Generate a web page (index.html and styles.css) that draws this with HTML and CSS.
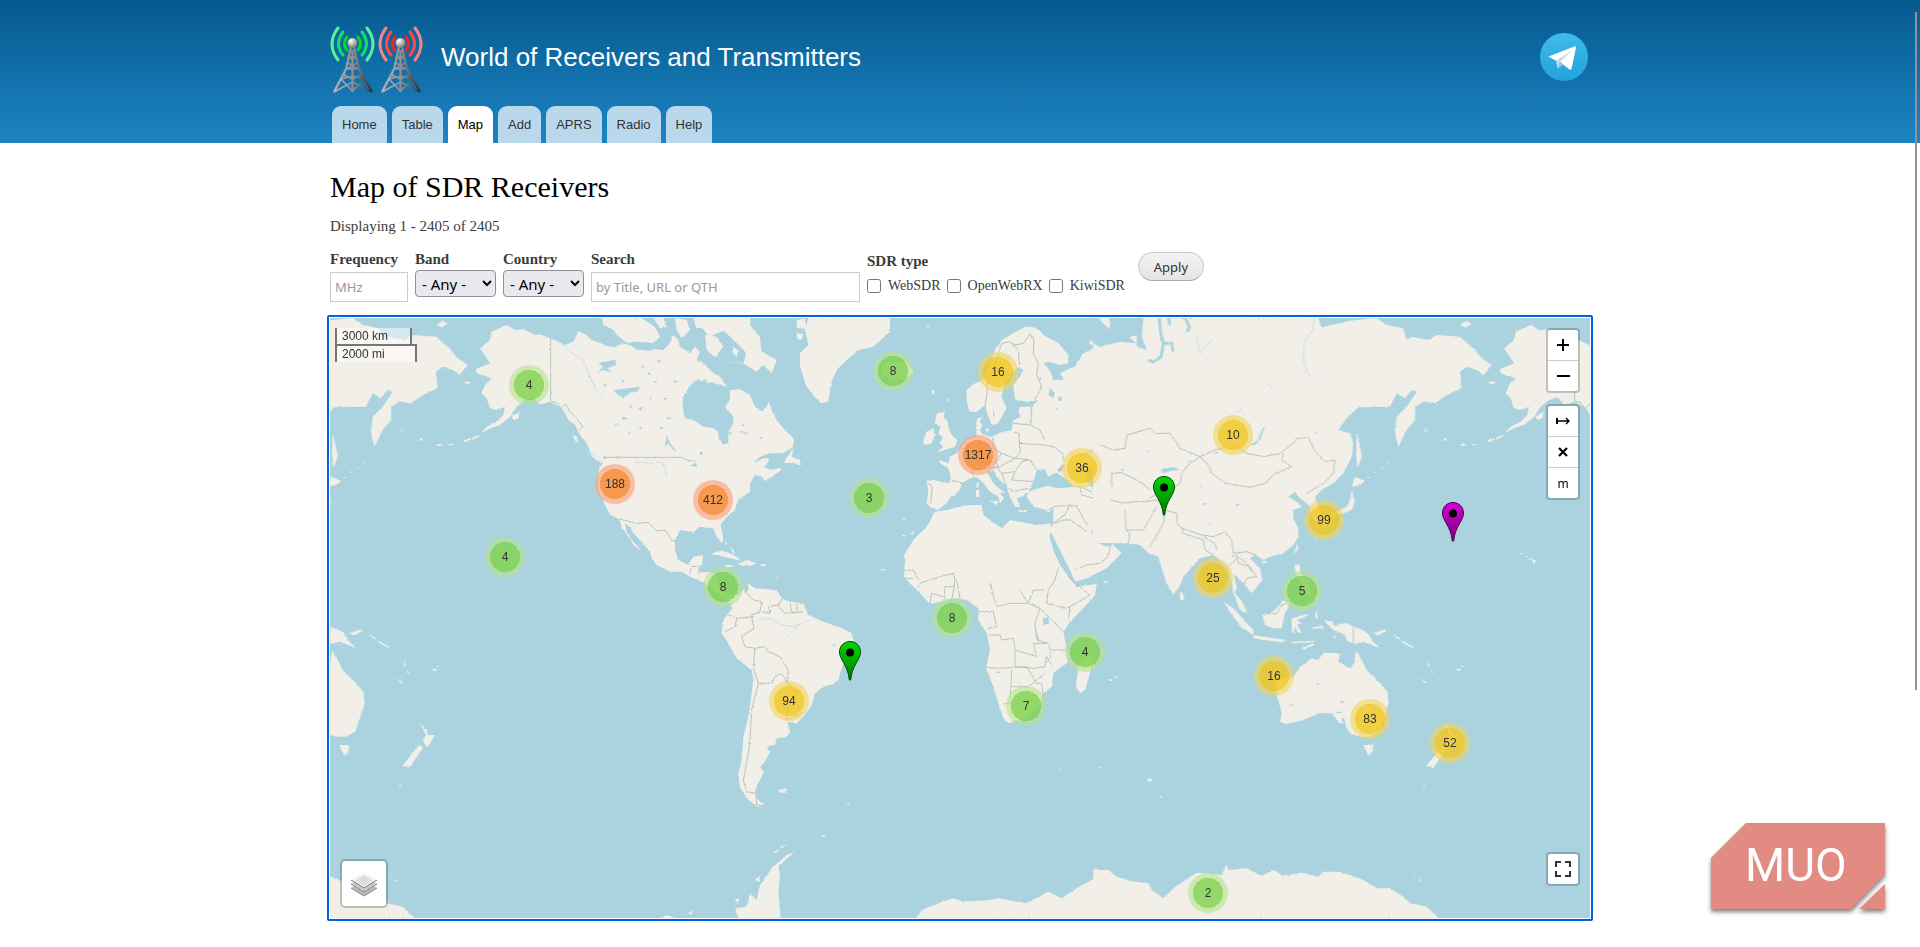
FILE: index.html
```html
<!DOCTYPE html>
<html lang="en">
<head>
<meta charset="utf-8">
<title>Map of SDR Receivers</title>
<link rel="stylesheet" href="styles.css">
</head>
<body>
<header class="header">
  <div class="wrap">
    <div class="branding">
      <a class="logo" href="#" aria-label="Home">
        <svg width="94" height="68" viewBox="0 0 94 68" fill="none">
          <defs>
            <radialGradient id="ball" cx=".35" cy=".3" r=".8"><stop offset="0" stop-color="#fff"/><stop offset="1" stop-color="#666"/></radialGradient>
            <linearGradient id="steel" gradientUnits="userSpaceOnUse" x1="4" x2="42"><stop offset="0" stop-color="#b4b8bc"/><stop offset=".55" stop-color="#8a8a8e"/><stop offset="1" stop-color="#2e2e34"/></linearGradient>
            <g id="mast" stroke="url(#steel)">
              <path d="M21 21 16 43 4 66M24 21l5 22 13 23M22.500 24v42" stroke-width="2.200"/>
              <path d="M19.500 30l6 3M25.500 30l-6 3M18 37l10 6M27 37l-10 6M16 43h13M16 43l-2 6 8.500 4 8.500-4-2-6M11 53l11.500 12L35 53M11 53l11.500-3L35 53M4 66l18.500-10L42 66" stroke-width="1.600"/>
              <circle cx="22.500" cy="17" r="5" fill="url(#ball)" stroke="none"/>
            </g>
          </defs>
          <use href="#mast"/><use href="#mast" x="48"/>
          <g stroke-width="3" stroke-linecap="round">
            <g stroke="#00dc20"><path d="M17 11q-5 7 0 13M28 11q5 7 0 13"/></g>
            <g stroke="#10e068"><path d="M13 6q-9 12 0 23M32 6q9 12 0 23"/></g>
            <g stroke="#58f09c"><path d="M8 2q-12 16 0 32M37 2q12 16 0 32"/></g>
            <g stroke="#ff2020"><path d="M65 11q-5 7 0 13M76 11q5 7 0 13"/></g>
            <g stroke="#ff4848"><path d="M61 6q-9 12 0 23M80 6q9 12 0 23"/></g>
            <g stroke="#ff8080"><path d="M56 2q-12 16 0 32M85 2q12 16 0 32"/></g>
          </g>
        </svg>
      </a>
      <a class="site-name" href="#">World of Receivers and Transmitters</a>
      <a class="telegram" href="#" aria-label="Telegram">
        <svg width="48" height="48" viewBox="0 0 48 48">
          <defs><linearGradient id="tg" x2="0" y2="1"><stop offset="0" stop-color="#40bae8"/><stop offset="1" stop-color="#22a3dc"/></linearGradient></defs>
          <circle cx="24" cy="24" r="24" fill="url(#tg)"/>
          <path d="M8.500 23.500 35 13.200q1.300-.3 1 1.300L31.500 36q-.7 1.300-2 .4L20 29l-3.500-1z" fill="#fff"/>
          <path d="M16 27.500 32 17.500 20 29l-1.700 6.500q-.8 0-1-1z" fill="#c8daea"/>
          <path d="M20 29l3 2.200-4.700 4.300z" fill="#a0c4dc"/>
        </svg>
      </a>
    </div>
    <nav class="tabs">
      <a href="#">Home</a><a href="#">Table</a><a href="#" class="active">Map</a><a href="#">Add</a><a href="#">APRS</a><a href="#">Radio</a><a href="#">Help</a>
    </nav>
  </div>
</header>
<main class="wrap">
  <h1>Map of SDR Receivers</h1>
  <p class="count">Displaying 1 - 2405 of 2405</p>
  <form class="filters">
    <div class="field freq"><label for="freq">Frequency</label><input id="freq" type="text" placeholder="MHz"></div>
    <div class="field"><label for="band">Band</label><select id="band"><option>- Any -</option></select></div>
    <div class="field"><label for="country">Country</label><select id="country"><option>- Any -</option></select></div>
    <div class="field search"><label for="q">Search</label><input id="q" type="text" placeholder="by Title, URL or QTH"></div>
    <fieldset class="types"><legend>SDR type</legend>
      <div class="checks">
        <input type="checkbox" id="t1"><label for="t1">WebSDR</label>
        <input type="checkbox" id="t2"><label for="t2">OpenWebRX</label>
        <input type="checkbox" id="t3"><label for="t3">KiwiSDR</label>
      </div>
    </fieldset>
    <button class="apply" type="button">Apply</button>
  </form>
  <div class="frame">
  <section class="map" aria-label="Map">
    <div class="pane">
      <svg class="world" width="1260" height="600" viewBox="-1110 24 3780 1800">
        <defs>
          <filter id="coast" filterUnits="userSpaceOnUse" x="-1200" y="-30" width="3960" height="1920">
            <feTurbulence type="fractalNoise" baseFrequency=".14" numOctaves="2" seed="4"/>
            <feDisplacementMap in="SourceGraphic" scale="7" xChannelSelector="R" yChannelSelector="G"/>
          </filter>
          <linearGradient id="gpin" x2="0" y2="1"><stop offset="0" stop-color="#00d800"/><stop offset="1" stop-color="#007800"/></linearGradient>
          <linearGradient id="ppin" x2="0" y2="1"><stop offset="0" stop-color="#d800d8"/><stop offset="1" stop-color="#780078"/></linearGradient>
          <g id="globe">
            <!-- North America, west -->
            <g transform="translate(-1140 0)">
              <path class="land" d="M560 45L585 60 610 58 640 72 665 75 690 85 715 95 735 105 760 95 775 65 800 75 815 90 840 98 860 108 885 112 905 100 930 105 950 118 985 122 1010 118 1030 120 1050 100 1060 75 1075 90 1080 110 1110 130 1125 110 1140 125 1130 150 1150 165 1150 185 1145 205 1120 215 1105 235 1090 260 1087 290 1095 325 1120 330 1150 350 1180 355 1195 365 1195 385 1210 405 1225 400 1290 440V545L1255 570 1243 600 1215 625 1202 645 1210 690 1205 700 1190 680 1180 655 1140 650 1120 665 1080 660 1065 690 1065 720 1075 750 1105 765 1120 740 1150 735 1145 765 1135 785 1165 788 1185 800 1190 845 1215 860 1240 862 1270 850 1290 840V880H1230L1215 865 1185 845 1150 815 1110 800 1085 785 1050 785 1010 765 995 745 990 725 960 690 940 670 930 650 915 640 920 665 935 690 950 705 960 720 940 705 925 680 905 650 898 628 870 615 855 585 835 540 832 510 838 470 850 460 835 445 810 425 800 400 780 375 765 345 745 330 730 300 710 285 690 275 660 283 640 262 615 270 590 290 570 320 540 345 510 355 480 370 500 350 530 335 550 315 555 290 530 300 510 295 500 265 485 250 495 225 515 205 470 190 468 178 510 160 480 115 510 90 515 65Z"/>
              <path class="land" d="M845 24H965L1005 50 1020 80 1000 100 960 95 920 98 890 75 880 60 850 45ZM1000 24H1030L1040 50 1022 56ZM1065 24 1100 30 1110 60 1085 85 1070 60ZM1120 24H1290V80L1250 95 1220 60 1190 70 1150 50 1130 55ZM1155 75 1190 80 1210 110 1185 140 1160 120ZM1240 110 1255 120 1250 140 1238 130ZM1160 180 1200 200 1220 230 1180 215 1160 220ZM350 45 370 34 382 42 365 52ZM575 318 600 305 595 325 580 330ZM432 215 452 215 445 222ZM760 375 770 380 775 400 762 388ZM800 425 830 440 850 458 832 452ZM350 402h14v5h-14ZM385 402h14v4h-14ZM430 392l20-8 2 5-18 8ZM455 385l20-10 3 4-20 10ZM300 385h7v7h-7ZM240 355l10 8-6 2ZM1174 730 1205 722 1240 735 1262 750 1230 745 1205 738ZM1255 765 1290 750V768ZM1215 765h22v6h-20Z"/>
              <path class="water" d="M835 158 885 150 888 165 860 175 880 190 850 180 830 190 850 170ZM880 240 925 235 960 230 950 245 930 248 910 265 895 255ZM1040 375 1050 400 1070 425 1060 420 1045 400 1035 410ZM1112 468 1140 450 1180 465 1190 480 1160 475 1130 470ZM1150 530 1150 490 1165 485 1180 500 1165 510 1162 530ZM1185 520 1182 490 1200 485 1212 495 1200 505 1195 520ZM905 320l20 5-15 5ZM955 295l15-5-8 12ZM880 340l25 8-20-2ZM1030 265l15-2-10 8ZM1040 320l14 5-10 5ZM965 165l12 3-9 7ZM1060 210l14 4-10 5ZM955 350l14 2-9 5ZM1140 425h8v9h-8ZM1015 350l18 4-10 4ZM985 185l10 10-12-2ZM805 195l10 6-12-1ZM905 210l12 4-10 5ZM930 285l9 5-11 3ZM1000 215l12-4-4 9ZM1010 150l14 3-9 6ZM850 225l10-3-4 8ZM925 365l10 4-9 3ZM990 260l7 6-9 3Z"/>
              <path class="border" d="M692 85V273L710 278 722 295 738 283 750 305 770 325 788 350 780 362M850 442H1087L1100 450 1120 453 1150 455 1175 475 1192 490 1195 520 1215 525 1245 510 1260 492 1290 490M900 628 950 640 985 637 1010 663 1035 660 1055 690 1066 695M1110 790 1115 770 1140 768 1135 790 1165 790 1150 810"/>
              <path class="river" d="M720 95 750 125 790 150 805 190 825 235 850 260M945 455 1000 460M1010 455 1035 465 1040 500M1230 160 1255 155 1280 165"/>
            </g>
            <!-- North America, east; Greenland; Atlantic islands -->
            <path class="land" d="M-10 440 30 425 62 405 85 400 85 365 100 340 100 320 75 290 90 270 90 240 120 238 150 255 165 290 185 305 200 290 207 275 215 300 230 330 250 355 280 385 280 410 250 430 210 430 180 440 160 460 190 445 208 445 200 465 190 470 215 480 235 475 245 480 215 500 195 512 185 500 165 495 155 510 145 530 125 545 110 570 105 600 75 625 62 645 60 600-10 600ZM325 24H570V65L520 110 475 120 440 150 410 180 395 215 385 275 365 280 345 262 320 230 300 170 300 130 325 105 315 60ZM0 24H130L180 80 185 125 230 150 215 190 190 165 170 185 130 160 140 130 110 100 70 60 30 80 0 50ZM290 30l25-4 5 30-30-2ZM290 68l20 5-5 18-14-5ZM0 150 40 190 55 225 20 210 0 215ZM45 90 65 100 50 140 30 130ZM280 415 275 440 300 450 302 468 280 458 250 460 262 440ZM210 480l30-6-12 10ZM545 165 570 155 620 155 640 185 620 205 580 212 550 195Z"/>
            <path class="water" d="M80 370l18-6-8 10ZM125 340l10 5-8 5ZM120 362l12 3-9 4ZM135 365l8 7-10 1ZM180 380l10 4-8 4Z"/>
            <path class="land" d="M35 735 65 722 90 730 120 750 100 748 70 735ZM115 762 140 750 170 760 150 768ZM75 765h22v5h-20ZM182 763h14v5h-14ZM75 690l8 12-5 3ZM90 705l15 25-4 2ZM230 790l4 20-4-5ZM605 672l12 4-8 4ZM628 674l10-8 2 5ZM540 778l15 0 0 4-14-2ZM695 240h7v12h-5ZM742 275l5-12 2 8ZM608 627h8v4h-8ZM680 48h10v4h-10ZM635 665l10 0-5 6Z"/>
            <!-- Europe and western Asia -->
            <path class="land" d="M1310 76 1290 80 1270 110 1245 105 1220 115 1190 110 1150 130 1125 170 1100 180 1080 190 1090 210 1060 210 1050 180 1030 160 1045 155 1080 165 1105 160 1105 135 1075 100 1030 75 1020 62 1000 50 975 50 940 70 905 90 885 120 870 160 850 210 820 222 800 240 800 270 808 305 830 305 855 285 865 320 875 345 895 340 905 320 920 295 905 260 910 230 935 190 955 170 970 180 960 200 940 225 945 270 985 275 1015 270 995 290 960 290 955 305 960 322 940 330 935 360 900 368 875 380 850 375 840 362 848 345 838 335 850 322 832 325 828 345 830 380 800 390 780 415 770 430 750 440 745 460 718 450 720 460 745 475 752 500 748 520 700 510 680 512 685 540 680 580 690 590 710 600 735 585 755 560 780 540 785 520 810 505 830 500 850 520 870 545 895 560 900 580 912 565 900 550 915 550 880 520 870 500 860 485 880 480 890 500 920 530 930 560 945 590 960 590 950 565 970 558 985 540 980 560 1000 590 1040 600 1060 590 1060 640 1050 660 1060 680 1090 740 1110 780 1125 815 1160 805 1220 775 1265 730 1240 705 1220 710 1195 700 1170 660 1190 670 1220 690 1310 700Z"/>
            <path class="land" d="M710 310 735 305 730 325 742 330 745 350 755 375 772 390 765 410 740 418 712 428 730 410 718 400 728 385 715 370 722 350 705 340ZM680 365 700 355 705 375 695 400 672 405 670 390ZM828 540h10v20h-10ZM830 518l7 0-2 16-6-3ZM870 572l25 2-5 12ZM955 600h28v5h-28ZM1035 602l20-4-8 8ZM755 555l14-5-4 8ZM858 355l8 0-2 10-8-3ZM1195 24H1225L1245 60 1225 55 1205 35ZM1168 92l12 0-2 12-10-2Z"/>
            <path class="water" d="M1000 515 1010 480 1035 478 1045 500 1060 492 1070 488 1110 515 1120 530 1080 535 1040 528 1000 540 985 545ZM1070 480 1090 462 1095 470 1080 488ZM1160 480 1205 470 1208 490 1185 515 1215 545 1215 585 1185 580 1180 540 1160 510ZM1050 235l15 15-5 15-15-10ZM1075 260h10v12h-10ZM880 300l5 15-6 2ZM1032 925h15v20h-18ZM1065 290l8 4-4 6ZM1020 200l5 8-8 2ZM1240 490h20v6h-16Z"/>
            <path class="border" d="M895 130 905 100 930 95 945 105 970 100 990 72 1002 90 1000 130 1015 160 1010 195 1025 230 1005 268M930 95 955 120 958 165M895 130 880 180 862 205 860 260 855 290M995 290 992 345 1020 360 1033 390M940 340 990 345M940 365 957 370 960 430 945 445M957 400 1033 405 1060 410 1088 430 1090 450M878 380 880 415 905 430 945 445 990 450 1010 480M800 400 805 440 830 455 870 460 890 455 905 430M752 510 790 520M685 520 697 530 692 580M820 500 815 480 860 475 900 470 945 445M890 470 905 490 945 485 965 455 985 450M945 485 935 510 1000 515M905 490 920 530 940 545 985 535M890 455 895 480M1115 530 1140 530 1145 555 1180 565M1060 590 1110 585 1130 590 1165 650M1060 640 1090 630 1112 630 1160 665M1110 585 1095 615 1065 635M1140 530 1175 545M1125 780 1160 765 1200 760 1225 740 1230 710M1215 575 1250 570 1290 610M1160 430 1200 405 1240 420 1280 405 1290 375M1290 530 1235 530 1235 490 1260 488M745 605 740 625 685 660 680 695M680 680 790 755 793 785 765 795 745 795 720 820M652 700 690 690 M612 738 635 735 652 695M703 705 710 790H650L620 785M827 585 830 610 840 650 840 700 857 720 793 755M857 720 885 730 958 750 968 748 970 640M970 730H1070M958 750 945 820 950 840 1000 870 1035 840M885 730 888 780 875 810 885 850 890 870 950 840M780 860 790 810 870 812 880 830 850 870 835 900 860 905 870 890"/>
            <!-- Africa and South America -->
            <g transform="translate(0 690)">
              <path class="land" d="M705-85 740-90 800-105 845-105 850-75 870-60 905-35 930-60 960-55 1010-45 1040-48 1050-50 1056-30 1048-15 1060 30 1080 75 1105 110 1130 140 1190 132 1185 165 1150 205 1110 245 1090 275 1100 330 1105 365 1060 400 1055 440 1030 460 1020 490 985 530 925 550 910 535 895 490 880 440 858 385 870 330 860 280 835 240 835 205 800 180 770 175 690 192 650 150 612 110 615 60 612 45 640 0 680-40ZM1165 335 1180 355 1170 400 1155 450 1140 460 1128 440 1135 380 1150 360ZM1228 418h5v5h-5ZM1246 410h5v4h-5ZM1210 124h12v4h-12Z"/>
              <path class="water" d="M1028 235 1045 232 1048 250 1030 255ZM1006 260 1014 290 1020 305 1012 298ZM1048 318l6 40-4-2ZM890 395h10v4h-10Z"/>
              <path class="border" d="M620 115H640M650 150 660 130 720 110 760 100 765 120 755 180M732 180 735 140 765 140M612 92 640 90 655 120M690 192 695 160 730 170M770 120 780 175M835 215 880 215 890 260 865 265M890 200 930 190 985 190 1020 205 1005 250 1010 300 1045 310 1050 330 1100 330M865 285 900 285 905 300 940 295 945 330 1010 350 1000 310 1040 310M858 382 895 385 980 380M935 390 930 490 910 492M945 330V380L1000 385 1035 380 1040 350 1055 375M980 380 1010 430 1025 430 1030 470M935 440 985 440 1035 400M1075 85 1065 120 1045 150 1040 190 1100 205 1170 165 1105 110M1110 200 1105 240M1020 205 1055 240 1090 275M985 190 1000 150 1035 150M985 190 960 150 M870 130 890 200"/>
              <path class="land" d="M0 100 30 95 50 110 60 150 95 165 115 165 130 150 145 130 165 145 230 150 245 175 270 185 310 190 325 225 370 245 420 262 455 280 460 300 440 350 425 385 415 420 400 432 370 440 345 460 335 495 310 530 290 550 262 545 270 575 260 590 230 595 225 615 200 620 210 635 195 665 180 680 192 695 175 730 165 750 170 775 195 797 170 800 140 775 120 740 115 700 125 660 130 590 145 530 155 460 160 420 155 390 110 355 85 310 65 280 68 245 95 205 92 175 60 165 30 130 0 125ZM235 750 262 745 258 758 240 757ZM435 785l14 8 0 4ZM365 886h10v4h-10ZM1076 687h5v4h-5ZM1198 681h5v3h-5Z"/>
              <path class="water" d="M133 145 143 135 146 150 136 160ZM395 315l14-3-8 6ZM160 365l7 10-5 4Z"/>
              <path class="border" d="M145 135 135 155 160 180 185 185 180 215 155 225 162 265 125 290 135 320 165 325 160 380 175 430 155 510 150 600 145 640 130 720 140 755 168 760 170 795 195 797M165 325 195 320 205 335 240 350 265 390 262 430 245 400 225 410 215 430 175 430M245 175 235 200 255 220 310 215M185 215 210 220 205 200 235 195M85 225 110 235 105 260 75 275M110 235 160 230M265 430 290 460 265 500 258 540 305 520M270 190 275 215M290 190 292 215"/>
              <path class="river" d="M180 240 210 235 250 255 280 260 330 240M260 290 300 250"/>
              <path class="land" d="M115 1134 105 1105 140 1100 150 1060 170 1080 180 1035 215 985 260 945 285 935 235 978 240 1010 235 1060 242 1134ZM105 1080l14-5-6 14ZM240 920l22-8-16 12ZM220 935l18-8-10 12ZM165 1020l14-12 0 18ZM650 1134 665 1110 715 1090 755 1075 790 1085 870 1080 895 1075 980 1090 1045 1055 1085 1075 1130 1045 1185 1015 1215 990 1250 1010 1310 1028V1134ZM-120 1134l20-8 30 8ZM-38 1120l16-8-2 10Z"/>
            </g>
            <!-- Central and eastern Asia -->
            <g transform="translate(1200 0)">
              <path class="land" d="M0 110 50 90 80 92 110 110 140 120 125 80 130 24H655L665 55 690 45 720 40 750 32 830 24 860 45 910 55 920 90 935 80 985 90 1010 75 1080 80 1120 115 1145 145 1175 165 1150 195 1130 180 1100 170 1080 185 1085 235 1040 255 1005 280 970 275 945 290 945 330 920 360 895 410 885 370 890 320 920 290 950 245 935 240 915 265 890 250 870 290 775 292 740 325 715 360 750 370 760 400 755 440 730 490 700 520 665 540 645 560 655 590 665 620 650 640 635 620 630 590 615 575 595 560 585 545 565 560 590 575 605 590 580 600 580 625 595 655 595 680 580 705 550 730 510 740 490 750 465 735 450 745 480 775 487 810 455 850 435 825 420 810 400 790 410 830 405 850 430 880 440 910 420 900 400 850 390 800 385 780 360 750 340 735 300 745 250 800 238 830 220 855 200 820 180 760 175 740 145 730 120 705 80 700-20 699V100Z"/>
              <path class="land" d="M770 370 778 400 785 440 772 475 768 430ZM765 500 795 512 780 525 755 530ZM755 540 765 575 755 600 735 608 700 612 720 600 740 590 750 570ZM660 625 680 620 685 640 670 655 662 640ZM690 615l20-3-10 12ZM583 728 592 702 595 715 588 728ZM484 755 500 750 495 762ZM583 765 598 765 602 790 625 810 635 860 615 850 600 815 588 790ZM240 845 252 855 250 872 240 868ZM1082 44 1100 34 1112 42 1095 52ZM1160 215l25 3-8 6ZM645 690l5-4 2 4ZM860 460l8-6 3 3ZM820 490l8-5 3 3ZM800 505l8-4 2 4ZM840 476l6-4 3 3Z"/>
              <path class="water" d="M445 405 470 395 490 350 494 352 482 385 465 405ZM185 478 220 472 240 480 215 482 187 490ZM60 480l14-6-4 8ZM263 455l14-6-6 8ZM408 582h8v5h-8ZM345 425h10v5h-10ZM310 580h10v4h-10ZM645 368l8-3 0 6ZM298 528h6v3h-6ZM142 422h6v5h-6ZM325 640h5v4h-5ZM30 24 70 70 110 100 60 95 0 110V60L30 75Z"/>
              <path class="bay" d="M178 24 182 70 190 100 183 140 160 156 145 150M190 100 215 100 220 125M205 24 210 45M255 24 268 50 262 65"/>
              <path class="river" d="M642 24 638 60 612 95 610 150 622 190 652 215M290 80 300 130 335 90M500 220 515 235M405 310 420 298 435 315"/>
              <path class="border" d="M0 405 40 420 75 415 80 375 150 355 165 370 210 370 240 415 300 440 345 420 400 405 440 430 490 440 540 430 580 400 590 385 625 383 645 425 675 455 705 450 700 490 670 520 620 550M300 440 325 465 335 490 375 520 450 532 495 520 525 490 575 470 545 450 550 430M300 440 265 465 245 490 240 520 210 540 165 555 140 570M35 530 35 490 65 488 120 515 150 540M30 570 75 580 100 575 135 575 170 570 195 600 230 610 230 640 245 655 305 675 340 680 375 665 395 690 400 730 440 725 470 735M75 600 78 660 130 660 170 590M85 700 90 670 78 660M150 710 190 640 195 600M245 655 250 670 310 690 315 720 340 735M310 680 345 700 350 720M395 740 410 735 415 760 450 770 470 800 440 805 430 830M385 770 395 760 415 740M415 740 440 760 460 790"/>
            </g>
            <!-- Oceania -->
            <g transform="translate(1200 780)">
              <path class="land" d="M530 370 525 330 580 320 600 290 635 265 655 270 670 248 720 250 715 275 750 295 763 280 768 240 785 270 800 300 840 340 862 365 866 400 850 450 838 485 810 500 780 500 750 490 735 465 715 455 695 430 655 430 610 450 560 463 540 455 545 430ZM790 525 820 525 815 550 805 557ZM370 95 400 115 440 160 460 180 458 195 430 175 400 140ZM460 195 500 202 560 210 545 216 490 210 460 204ZM575 215l70-3-5 5-65 3ZM605 235l35-15 4 4-32 14ZM487 135 520 125 550 90 570 100 555 130 545 175 520 175 495 165ZM575 145 620 132 622 137 590 150 605 160 592 165 605 188 595 188 585 170 582 190 575 185ZM645 130l6-8 2 25-6-4ZM635 172l35-4 0 6-30 2ZM672 150 700 155 700 168 735 158 800 185 820 215 840 235 815 225 790 215 765 222 740 212 735 195 700 180 685 165ZM820 190l35-12 4 4-25 14ZM875 190l25 15-3 4ZM905 210l35 22-3 3-30-18ZM985 270l4 20-6-3ZM995 300l4 12-6-4ZM955 322l25 14-2 4ZM1070 296h12v6h-12ZM1082 290l8-4 0 4ZM140 625l18 2-4 8-10-2ZM180 678h5v5h-5ZM28 327h6v3h-6ZM45 320h5v4h-5ZM410 150l20 28-4 0ZM700 195l8 3-6 8ZM970 646h4v5h-4Z"/>
              <path class="border" d="M760 165V220M492 132 530 130 545 105 560 100"/>
              <path class="water" d="M722 392h9v6h-9ZM710 425h14v4h-14ZM650 340h8v4h-8ZM725 445l6 25 6-2-4-25ZM570 403h8v4h-8Z"/>
              <path class="land" d="M-20 896 0 900 25 900 60 930 145 940 155 960 190 985 225 950 290 908 365 915 380 882 385 900 440 895 485 918 520 900 550 918 605 908 655 920 670 905 720 905 790 930 830 955 870 955 910 980 930 1000 980 1010 1015 1044H-20ZM940 908l6 8-4 0ZM960 928h4v6h-4Z"/>
            </g>
            <g transform="translate(1932 900)">
              <path class="land" d="M300 340 320 360 325 375 345 375 330 400 322 412 308 392 318 375ZM295 407 310 412 290 440 270 472 247 468 265 445Z"/>
            </g>
          </g>
        </defs>
        <rect x="-1110" y="24" width="3780" height="1800" fill="#aad3df"/>
        <g filter="url(#coast)">
          <use href="#globe"/><use href="#globe" x="-3072"/><use href="#globe" x="3072"/>
          <path class="land" d="M2462 730h6v3h-6ZM2476 738h6v3h-6ZM2488 746h7v3h-7ZM2498 748l10 6-5 7-6-5Z"/>
        </g>
      </svg>
      <span class="cluster small" style="--x:-431px;--y:67px">4</span>
      <span class="cluster large" style="--x:-345px;--y:166px">188</span>
      <span class="cluster large" style="--x:-247px;--y:182px">412</span>
      <span class="cluster small" style="--x:-455px;--y:239px">4</span>
      <span class="cluster small" style="--x:-237px;--y:269px">8</span>
      <span class="cluster small" style="--x:-67px;--y:53px">8</span>
      <span class="cluster medium" style="--x:38px;--y:54px">16</span>
      <span class="cluster large" style="--x:18px;--y:137px">1317</span>
      <span class="cluster medium" style="--x:122px;--y:150px">36</span>
      <span class="cluster small" style="--x:-91px;--y:180px">3</span>
      <span class="cluster small" style="--x:-8px;--y:300px">8</span>
      <span class="cluster medium" style="--x:273px;--y:117px">10</span>
      <span class="cluster medium" style="--x:364px;--y:202px">99</span>
      <span class="cluster medium" style="--x:253px;--y:260px">25</span>
      <span class="cluster small" style="--x:342px;--y:273px">5</span>
      <span class="cluster medium" style="--x:-171px;--y:383px">94</span>
      <span class="cluster small" style="--x:66px;--y:388px">7</span>
      <span class="cluster small" style="--x:125px;--y:334px">4</span>
      <span class="cluster medium" style="--x:314px;--y:358px">16</span>
      <span class="cluster medium" style="--x:410px;--y:401px">83</span>
      <span class="cluster medium" style="--x:490px;--y:425px">52</span>
      <span class="cluster small" style="--x:248px;--y:575px">2</span>
      <svg class="pin" style="--x:204px;--y:198px" viewBox="0 0 22 40"><path d="M11 .5C5 .5.500 5 .500 11c0 8 8.500 13 9.800 28h1.400C13 24 21.500 19 21.500 11 21.500 5 17 .5 11 .5z" fill="url(#gpin)" stroke="#004a00"/><circle cx="11" cy="11.500" r="4"/></svg>
      <svg class="pin" style="--x:-110px;--y:363px" viewBox="0 0 22 40"><path d="M11 .5C5 .5.500 5 .500 11c0 8 8.500 13 9.800 28h1.400C13 24 21.500 19 21.500 11 21.500 5 17 .5 11 .5z" fill="url(#gpin)" stroke="#004a00"/><circle cx="11" cy="11.500" r="4"/></svg>
      <svg class="pin" style="--x:493px;--y:224px" viewBox="0 0 22 40"><path d="M11 .5C5 .5.500 5 .500 11c0 8 8.500 13 9.800 28h1.400C13 24 21.500 19 21.500 11 21.500 5 17 .5 11 .5z" fill="url(#ppin)" stroke="#4a004a"/><circle cx="11" cy="11.500" r="4"/></svg>
    </div>
    <div class="scale"><span class="km">3000 km</span><span class="mi">2000 mi</span></div>
    <div class="controls top">
      <div class="bar">
        <button type="button" aria-label="Zoom in"><svg width="14" height="14"><path d="M7 1v12M1 7h12" stroke="#000" stroke-width="2"/></svg></button>
        <button type="button" aria-label="Zoom out"><svg width="14" height="14"><path d="M1 7h13" stroke="#000" stroke-width="2"/></svg></button>
      </div>
      <div class="bar">
        <button type="button" aria-label="Measure"><svg width="14" height="8" fill="none" stroke="#000"><path d="M1 1v6" stroke-width="2"/><path d="M1 4h12M10 1l3 3-3 3" stroke-width="1.400"/></svg></button>
        <button type="button" aria-label="Clear"><svg width="10" height="10"><path d="M1 1l8 8M9 1 1 9" stroke="#000" stroke-width="2.200"/></svg></button>
        <button type="button">m</button>
      </div>
    </div>
    <div class="controls bottom">
      <div class="bar"><button type="button" aria-label="Full screen"><svg width="16" height="16" fill="none" stroke="#333" stroke-width="2"><path d="M1 6V1h5M10 1h5v5M15 10v5h-5M6 15H1v-5"/></svg></button></div>
    </div>
    <button class="layers" type="button" aria-label="Layers">
      <svg width="26" height="26" viewBox="0 0 26 26">
        <path d="M0 17l13 8 13-8-13-8z" fill="#bbb"/><path d="M0 17l13 8 13-8" fill="none" stroke="#888"/>
        <path d="M0 13l13 8 13-8-13-8z" fill="#ccc"/><path d="M0 13l13 8 13-8" fill="none" stroke="#888"/>
        <path d="M0 9l13 8 13-8-13-8z" fill="#f4f4f4"/><path d="M4 9.500 13 15l9-5.500L13 4z" fill="#dcdcdc"/><path d="M0 9l13 8 13-8" fill="none" stroke="#777"/>
      </svg>
    </button>
  </section>
  </div>
</main>
<div class="scroll-thumb"></div>
<div class="badge">
  <svg width="176" height="90" viewBox="0 0 176 90"><path d="M36 1H175V52L141 87H1V36zM175 62V87H149z" fill="#e18b82"/></svg>
  <span>MUO</span>
</div>
</body>
</html>
```
FILE: styles.css
```css
* { box-sizing: border-box; }

body {
  margin: 0;
  background: #fff;
  color: #3b3b3b;
  font: 14px/20px Georgia, "Liberation Serif", serif;
}

.wrap {
  width: calc(100% - 32px);
  max-width: 1260px;
  margin: 0 auto;
}

.header { background: linear-gradient(#055a8f, #1d84c3); }

.branding {
  display: flex;
  align-items: center;
  padding: 22px 2px 14px 0;
}
.logo { height: 70px; margin-right: 17px; padding-top: 4px; }
.site-name {
  color: #fff;
  font: 26px/32px "Liberation Sans", Arial, sans-serif;
  text-decoration: none;
}
.telegram { height: 48px; margin-left: auto; }

.tabs { display: flex; gap: 5px; padding-left: 2px; }
.tabs a {
  padding: 0 10px;
  border-radius: 9px 9px 0 0;
  background: #bad8eb;
  color: #333;
  font: 13px/37px "Liberation Sans", Arial, sans-serif;
  text-decoration: none;
}
.tabs .active { background: #fff; color: #000; }

h1 {
  margin: 27px 0 0;
  color: #000;
  font-size: 30px;
  font-weight: normal;
  line-height: 34px;
}
.count { margin: 12px 0 0; font-size: 15px; }

.filters { display: flex; align-items: flex-start; gap: 7px; margin-top: 13px; height: 66px; }
.field { display: flex; flex-direction: column; }
.field label, .types legend { font-weight: bold; line-height: 20px; font-size: 15px; }
.field input {
  width: 100%;
  height: 30px;
  margin-top: 3px;
  padding: 4px;
  border: 1px solid #ccc;
  font: 13px "Noto Sans", sans-serif;
}
.field input::placeholder { color: #999; opacity: 1; }
.freq { width: 78px; }
.search { width: 269px; }
.field select {
  width: 81px;
  height: 27px;
  margin-top: 1px;
  padding: 0 2px;
  border: 1px solid #8f8f9d;
  border-radius: 4px;
  background: #e9e9ed;
  color: #000;
  font: 15px "Noto Sans", sans-serif;
}
.types { margin: 2px 0 0; padding: 0; border: 0; }
.types legend { padding: 0; }
.checks { display: flex; align-items: center; height: 30px; }
.checks input { width: 14px; height: 14px; margin: 0 7px 0 0; }
.checks label { margin-right: 6px; }
.apply {
  width: 66px;
  height: 29px;
  margin: 3px 0 0;
  border: 1px solid #ccc;
  border-bottom-color: #aaa;
  border-radius: 15px;
  background: linear-gradient(#f3f3f3, #e4e4e4);
  color: #333;
  font: 13px "Noto Sans", sans-serif;
}

.frame {
  margin: 0 -3px;
  padding: 1px;
  border: 2px solid #0560e0;
  border-radius: 2px;
}
.map {
  position: relative;
  height: 600px;
  overflow: hidden;
  background: #aad3df;
  color: #333;
  font: 12px/18px "Liberation Sans", Arial, sans-serif;
}
.pane { position: absolute; top: 0; left: 50%; }
.world { position: absolute; top: 0; left: -630px; }
.land { fill: #f2efe9; }
.water { fill: #aad3df; }
.border { fill: none; stroke: #b8c4b8; stroke-width: 3; }
.river { fill: none; stroke: #c8dfe4; stroke-width: 3; }
.bay { fill: none; stroke: #aad3df; stroke-width: 9; }

.cluster {
  position: absolute;
  left: var(--x);
  top: var(--y);
  width: 40px;
  height: 40px;
  margin: -20px;
  border: 5px solid transparent;
  border-radius: 50%;
  line-height: 30px;
  text-align: center;
  white-space: nowrap;
}
.small { background: radial-gradient(circle, rgba(110, 204, 57, .6) 15px, transparent 15px) border-box, rgba(181, 226, 140, .6) border-box; }
.medium { background: radial-gradient(circle, rgba(240, 194, 12, .6) 15px, transparent 15px) border-box, rgba(241, 211, 87, .6) border-box; }
.large { background: radial-gradient(circle, rgba(241, 128, 23, .6) 15px, transparent 15px) border-box, rgba(253, 156, 115, .6) border-box; }
.pin {
  position: absolute;
  left: var(--x);
  top: var(--y);
  width: 22px;
  height: 40px;
  margin: -40px 0 0 -11px;
}

.scale { position: absolute; top: 10px; left: 5px; display: flex; flex-direction: column; align-items: flex-start; }
.scale span {
  border: 2px solid #777;
  background: rgba(255, 255, 255, .5);
  padding-left: 5px;
  line-height: 16px;
}
.scale .km { width: 77px; border-top: 0; border-bottom: 0; }
.scale .mi { width: 82px; border-bottom: 0; }

.controls { position: absolute; right: 10px; display: grid; gap: 11px; }
.controls.top { top: 10px; }
.controls.bottom { bottom: 32px; }
.bar {
  display: grid;
  border: 2px solid rgba(0, 0, 0, .2);
  border-radius: 4px;
  background: #fff;
  background-clip: padding-box;
}
.bar button {
  display: grid;
  place-items: center;
  width: 30px;
  height: 30px;
  padding: 0;
  border: 0;
  background: none;
  color: #000;
  font: 12px "Noto Sans", sans-serif;
}
.bar button + button { height: 31px; border-top: 1px solid #ccc; }
.layers {
  position: absolute;
  left: 10px;
  bottom: 10px;
  display: grid;
  place-items: center;
  width: 48px;
  height: 49px;
  padding: 0;
  border: 2px solid rgba(0, 0, 0, .2);
  border-radius: 5px;
  background: #fff;
  background-clip: padding-box;
}

.scroll-thumb {
  position: absolute;
  top: 12px;
  right: 3px;
  width: 2px;
  height: 678px;
  background: #939393;
}
.badge { position: absolute; right: 34px; bottom: 35px; height: 90px; }
.badge svg { filter: drop-shadow(0 3px 2px rgba(0, 0, 0, .5)); }
.badge span {
  position: absolute;
  top: 17px;
  left: 35px;
  color: #fff;
  font: 46px/52px Roboto, sans-serif;
}
```
